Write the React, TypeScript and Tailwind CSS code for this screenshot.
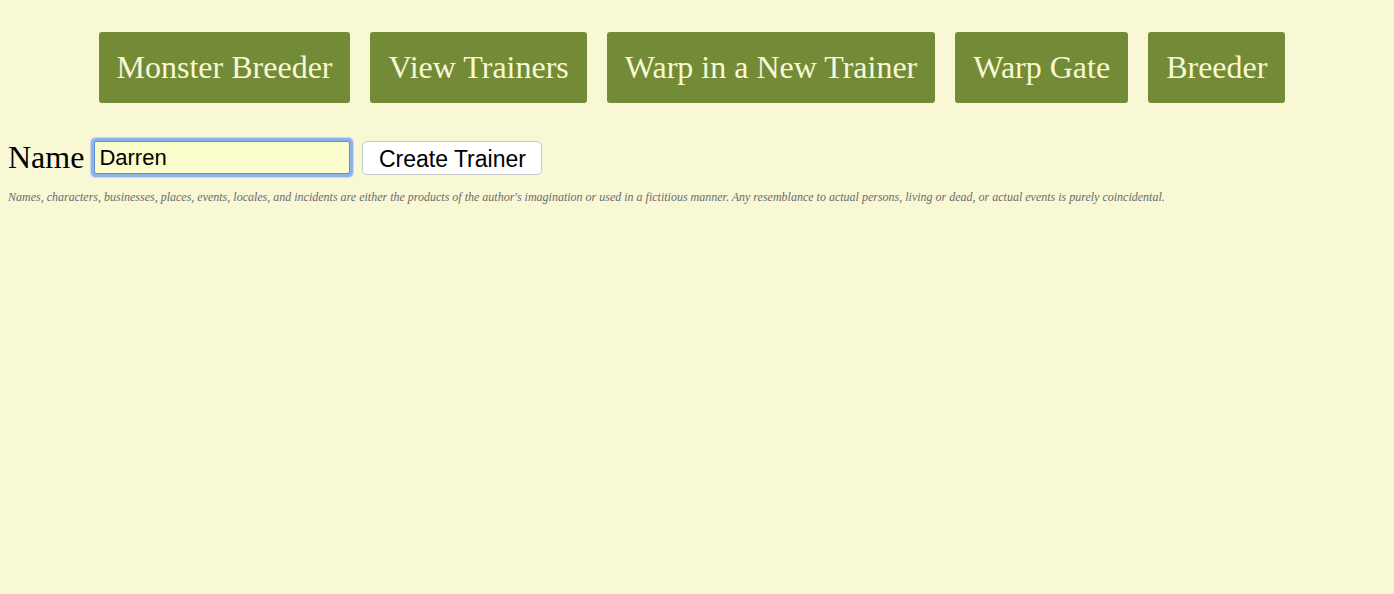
import React from "react";

const navItems = ["Monster Breeder", "View Trainers", "Warp in a New Trainer", "Warp Gate", "Breeder"];

export default function App() {
  return (
    <div className="min-h-[594px] w-full bg-[#f8f8d5] font-['Liberation_Serif',serif] text-black">
      <nav className="flex justify-center gap-[20px] pt-[32px] pr-[10px]">
        {navItems.map((t) => (
          <a
            key={t}
            href="#"
            className="block h-[71px] rounded-[3px] bg-[#738b36] px-[18px] font-['Liberation_Serif',serif] text-[32px] leading-[71px] whitespace-nowrap text-[#f8f8d5]"
          >
            {t}
          </a>
        ))}
      </nav>
      <div className="mt-[35px] flex h-[39px] items-center pl-[8px]">
        <span className="font-['Liberation_Serif',serif] text-[32px] leading-[37px]">Name</span>
        <input
          defaultValue="Darren"
          className="ml-[10px] h-[33px] w-[256px] rounded-[2px] border border-[#5f8fd6] bg-[#fafccb] px-[4px] font-['Liberation_Sans',Arial,sans-serif] text-[22px] text-black shadow-[0_0_0_3px_#8db3ea,0_0_1px_4px_#c6d8ee] outline-none"
        />
        <button className="ml-[12px] h-[34px] w-[180px] rounded-[5px] border border-[#c8c8c8] bg-white font-['Liberation_Sans',Arial,sans-serif] text-[23px] leading-[34px] text-black">
          Create Trainer
        </button>
      </div>
      <p className="mt-[11px] pl-[8px] font-['Liberation_Serif',serif] text-[12px] italic text-[#6b6b6b]">
        Names, characters, businesses, places, events, locales, and incidents are either the products of the author's imagination or used in a fictitious manner. Any resemblance to actual persons, living or dead, or actual events is purely coincidental.
      </p>
    </div>
  );
}
